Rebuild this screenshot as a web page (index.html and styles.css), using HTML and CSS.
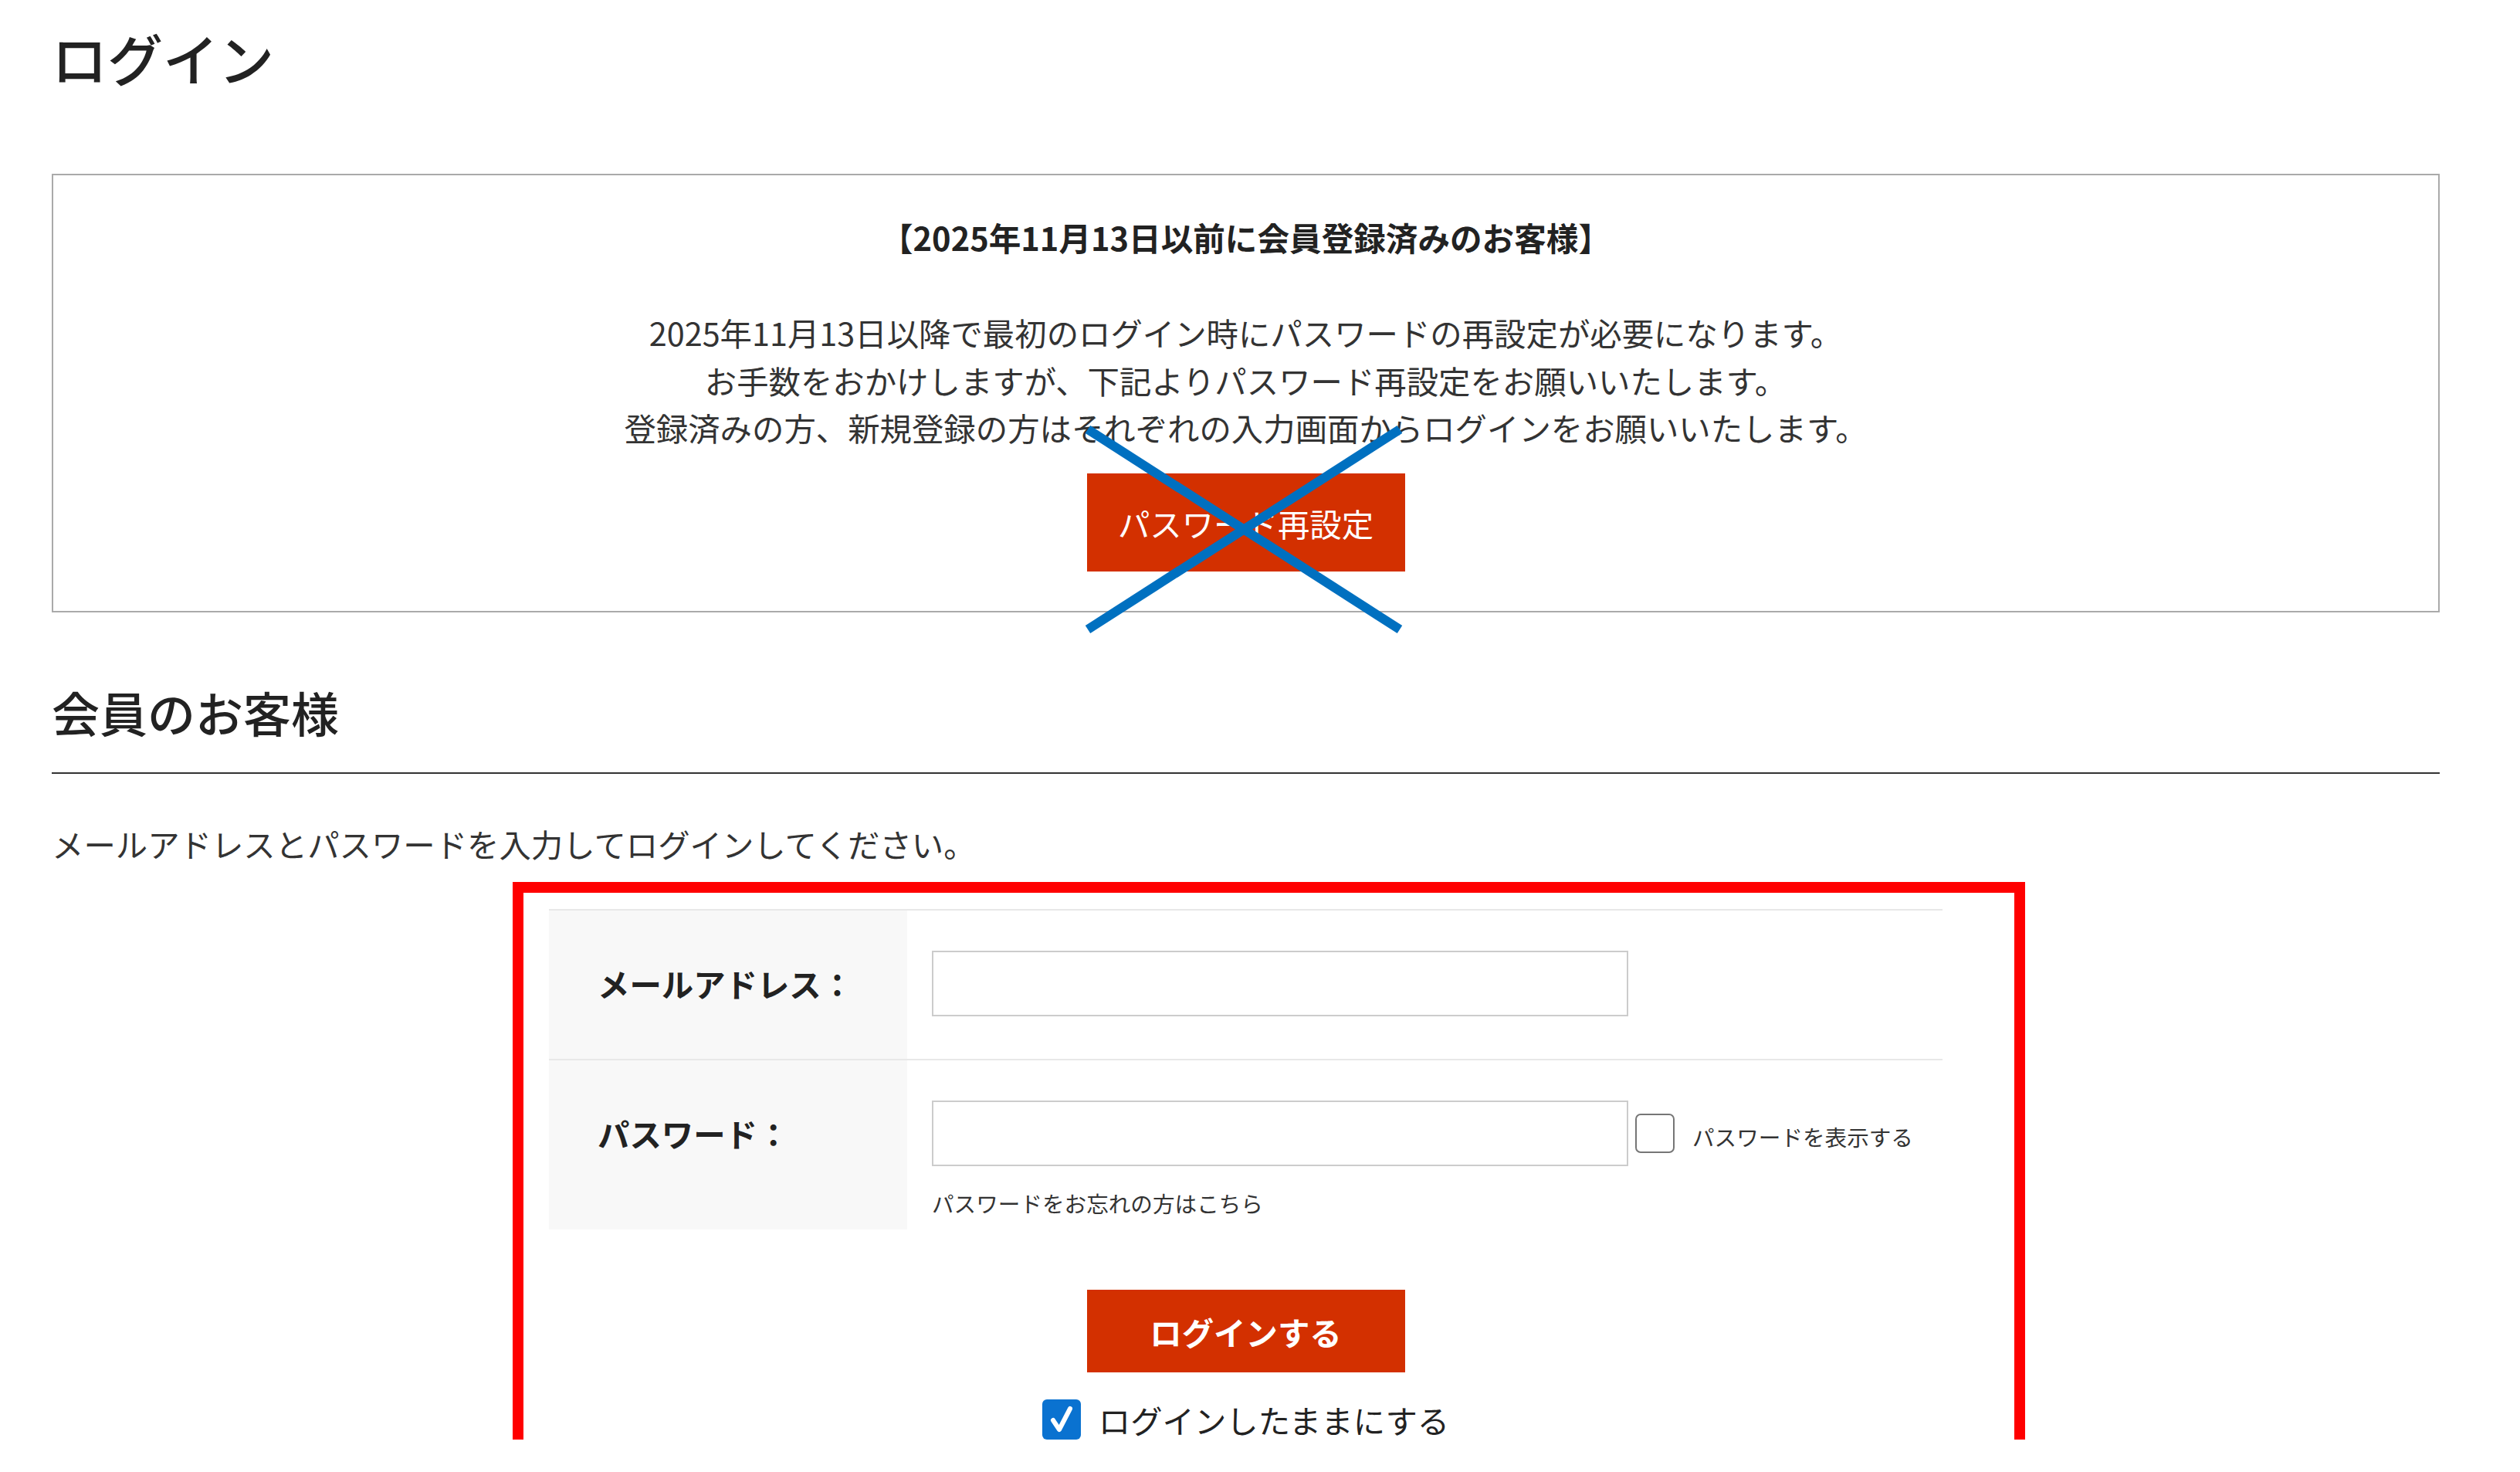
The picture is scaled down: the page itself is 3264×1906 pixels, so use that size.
FILE: index.html
```html
<!DOCTYPE html>
<html lang="ja">
<head>
<meta charset="utf-8">
<title>ログイン</title>
<link rel="stylesheet" href="styles.css">
</head>
<body>
<div class="page">
  <h1 class="page-title">ログイン</h1>

  <section class="notice">
    <p class="notice-head">【2025年11月13日以前に会員登録済みのお客様】</p>
    <p class="notice-body">2025年11月13日以降で最初のログイン時にパスワードの再設定が必要になります。<br>お手数をおかけしますが、下記よりパスワード再設定をお願いいたします。<br>登録済みの方、新規登録の方はそれぞれの入力画面からログインをお願いいたします。</p>
    <a class="btn btn-reset" href="#">パスワード再設定</a>
  </section>

  <h2 class="section-title">会員のお客様</h2>
  <p class="lead">メールアドレスとパスワードを入力してログインしてください。</p>

  <form class="login-form">
    <div class="form-table">
      <div class="form-row">
        <div class="form-th">メールアドレス：</div>
        <div class="form-td">
          <input class="text-input" type="text">
        </div>
      </div>
      <div class="form-row">
        <div class="form-th">パスワード：</div>
        <div class="form-td form-td-pw">
          <div class="pw-line">
            <input class="text-input" type="password">
            <span class="check-box"></span>
            <span class="show-pw">パスワードを表示する</span>
          </div>
          <a class="forgot" href="#">パスワードをお忘れの方はこちら</a>
        </div>
      </div>
    </div>
    <div class="actions">
      <a class="btn btn-login" href="#">ログインする</a>
      <div class="remember">
        <span class="check-box checked"><svg viewBox="0 0 50 52" width="50" height="52"><path d="M14 27 L22 39 L36 12" fill="none" stroke="#fff" stroke-width="6" stroke-linecap="round" stroke-linejoin="round"/></svg></span>
        <span class="remember-text">ログインしたままにする</span>
      </div>
    </div>
  </form>
</div>

<div class="annot-box"></div>
<svg class="annot-x" viewBox="0 0 422 276" width="422" height="276">
  <line x1="9" y1="8" x2="413" y2="267" stroke="#0070c0" stroke-width="12"/>
  <line x1="413" y1="8" x2="9" y2="267" stroke="#0070c0" stroke-width="12"/>
</svg>
</body>
</html>
```

FILE: styles.css
```css
html, body {
  margin: 0;
  padding: 0;
  background: #ffffff;
}

body {
  position: relative;
  font-family: "Noto Sans CJK JP", "Noto Sans", sans-serif;
  color: #333333;
}

.page {
  width: 3093px;
  margin-left: 67px;
}

.page-title {
  margin: 0;
  padding-top: 24px;
  font-size: 72px;
  line-height: 100px;
  font-weight: 500;
  color: #222222;
}

.notice {
  margin-top: 101px;
  border: 2px solid #aaaaaa;
  padding: 50px 0 51px;
  text-align: center;
}

.notice-head {
  margin: 0;
  font-size: 41.6px;
  line-height: 61.5px;
  font-weight: 700;
  color: #222222;
}

.notice-body {
  margin: 61.5px 0 0;
  font-size: 41.4px;
  line-height: 61.5px;
}

.btn {
  display: flex;
  align-items: center;
  justify-content: center;
  background: #d33000;
  color: #ffffff;
  text-decoration: none;
  font-size: 41.4px;
}

.btn-reset {
  width: 412px;
  height: 127px;
  margin: 28.5px auto 0;
}

.section-title {
  margin: 84px 0 0;
  padding-bottom: 33px;
  border-bottom: 2px solid #333333;
  font-size: 62px;
  line-height: 90px;
  font-weight: 500;
  color: #222222;
}

.lead {
  margin: 60px 0 0;
  font-size: 41.4px;
  line-height: 61.5px;
}

.form-table {
  width: 1805px;
  margin: 53.5px auto 0;
}

.form-row {
  display: grid;
  grid-template-columns: 464px 1fr;
  border-top: 2px solid #e8e8e8;
}

.form-th {
  background: #f8f8f8;
  padding: 52px 0 0 63px;
  font-size: 41.4px;
  line-height: 85px;
  font-weight: 700;
  color: #222222;
}

.form-td {
  padding: 52px 0 55px 32px;
}

.form-td-pw {
  padding-bottom: 13px;
}

.text-input {
  display: block;
  box-sizing: border-box;
  width: 902px;
  height: 85px;
  margin: 0;
  border: 2px solid #cccccc;
  background: #ffffff;
  border-radius: 0;
  outline: none;
}

.pw-line {
  display: flex;
  align-items: center;
}

.check-box {
  display: inline-block;
  box-sizing: border-box;
  width: 51px;
  height: 51px;
  border: 2px solid #767676;
  border-radius: 7px;
  background: #ffffff;
  flex: none;
}

.pw-line .check-box {
  margin-left: 9px;
}

.show-pw {
  margin-left: 23px;
  padding-top: 8px;
  font-size: 28.6px;
  line-height: 42px;
  color: #333333;
}

.forgot {
  display: block;
  margin-top: 27px;
  font-size: 28.6px;
  line-height: 42px;
  color: #333333;
  text-decoration: none;
}

.actions {
  margin-top: 78px;
}

.btn-login {
  width: 412px;
  height: 107px;
  margin: 0 auto;
  font-weight: 700;
}

.remember {
  display: flex;
  justify-content: center;
  align-items: center;
  margin-top: 35px;
  gap: 23px;
}

.check-box.checked {
  width: 50px;
  height: 52px;
  border: none;
  background: #0a72d0;
  border-radius: 6px;
}

.check-box.checked svg {
  display: block;
}

.remember-text {
  font-size: 41.4px;
  line-height: 52px;
  color: #222222;
}

.annot-box {
  position: absolute;
  left: 664px;
  top: 1142px;
  width: 1959px;
  height: 750px;
  box-sizing: border-box;
  border: 14px solid #ff0000;
}

.annot-x {
  position: absolute;
  left: 1400px;
  top: 548px;
}
```
